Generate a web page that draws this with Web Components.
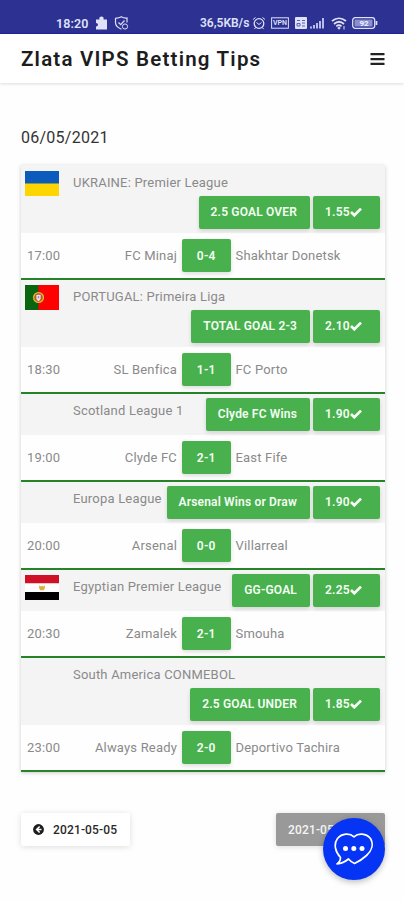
<!DOCTYPE html>
<html lang="en"><head><meta charset="utf-8"><title>Zlata VIPS Betting Tips</title>
<style>html,body{margin:0;background:#fefefe;width:404px;height:900px;overflow:hidden}body{font-family:Roboto,sans-serif;font-size:13px;color:#8a8a8a}</style></head>
<body><tips-app></tips-app>
<script>
const define=(name,html)=>customElements.define(name,class extends HTMLElement{
  connectedCallback(){if(this.shadowRoot)return;const r=this.attachShadow({mode:'open'});
    r.innerHTML='<style>*{box-sizing:border-box}svg{display:block;flex:none}</style>'+(typeof html==='function'?html(this):html);}
});

define('status-bar',`<style>
:host{display:flex;box-sizing:border-box;height:34px;background:#2d3192;border-bottom:1px solid #2022a0;color:#dfe1f8;font-weight:600;padding:13px 26px 0 56px;align-items:center;fill:none;stroke:#dfe1f8}
.t{font-size:12.5px;letter-spacing:.1px;width:39px;white-space:nowrap}.n{margin-left:auto;font-size:12px;width:50px;white-space:nowrap}svg{margin:0}
</style><span class="t">18:20</span>
<svg width="14" height="14" viewBox="0 0 14 14"><path d="M1 3.500h3.500C3.800 1.500 5 .5 6.500.5S9.200 1.500 8.500 3.500H12v10H1V10.500c2.600 0 2.600-3.500 0-3.500z" fill="#dfe1f8" stroke="none"/></svg>
<svg style="margin-left:5px" width="15" height="14" viewBox="0 0 15 14"><path d="M1.500 2q3 .3 5.700-1.200Q10 2.300 13 2v4.500M1.500 2v4.500c0 3.500 3 5.500 6 6.700M4.500 6.500l2.200 2.200L10.500 4.500" stroke-width="1.200"/><circle cx="11" cy="10.500" r="2.600"/></svg>
<span class="n">36,5KB/s</span>
<svg style="margin-left:2px" width="14" height="14" viewBox="0 0 14 14"><circle cx="7" cy="7.500" r="4.800" stroke-width="1.300"/><path d="M1 3.500l2.500-2M13 3.500l-2.500-2M4.500 6.500L7 8.500l2.500-2M3.500 11.500L2.500 13M10.500 11.500l1 1.500"/></svg>
<svg style="margin-left:5px" width="18" height="12" viewBox="0 0 18 12"><rect x=".6" y=".8" width="16.800" height="10.400"/><text x="9" y="8.400" text-anchor="middle" font-size="7" fill="#dfe1f8" stroke="none">VPN</text></svg>
<svg style="margin-left:6px" width="30" height="12" viewBox="0 0 30 12"><rect width="12" height="12" rx="1" fill="#dfe1f8" stroke="none"/><path d="M2 3.500h3M7 3.500h3M2 6.500h3v2.500H2zM7 6h3M7 9h3" stroke="#5c60b4"/><path d="M15 9.500h2v2h-2zM18 8h2v3.500h-2zM21 6h2v5.500h-2zM24 4h2v7.500h-2zM27 1h2v10.500h-2z" fill="#b8bce8" stroke="none"/></svg>
<svg style="margin-left:6px" width="16" height="13" viewBox="0 0 16 13"><path d="M1 4Q8-1.500 15 4M3 7Q8 2.500 13 7M5.300 9.300Q8 7 10.500 9.300" stroke-width="1.700"/><circle cx="8" cy="11" r="1" fill="#dfe1f8"/><path d="M13 9v3.500"/></svg>
<svg style="margin-left:5px" width="26" height="12" viewBox="0 0 26 12"><rect x=".7" y=".7" width="22" height="10.600" rx="2.500" stroke-width="1.300"/><rect x="2.500" y="2.500" width="18" height="7" fill="#8b8fd0" stroke="none"/><path d="M24.500 4v4" stroke-width="1.700"/><text x="12" y="9" text-anchor="middle" font-size="8" font-weight="700" fill="#f0f1ff" stroke="none">92</text></svg>`);

define('app-header',`<style>
:host{display:flex;box-sizing:border-box;height:49px;background:#fff;padding:0 19px 0 21px;justify-content:space-between;align-items:center;box-shadow:0 1px 3px #0002;color:#1d1d1d}
h1{font-size:20.5px;font-weight:600;letter-spacing:1.21px;margin:0;white-space:nowrap}
</style><h1><slot></slot></h1><svg width="15" height="12" viewBox="0 0 15 12" fill="#222"><path d="M.5 0h14v2.300H.5zM.5 4.900h14v2.300H.5zM.5 9.700h14V12H.5z"/></svg>`);

define('tip-badge',e=>`<style>
:host{display:inline-flex;box-sizing:border-box;height:33.500px;align-items:center;justify-content:center;background:#49b04e;color:#f3fff3;border-radius:2px;font-weight:600;font-size:12px;letter-spacing:.17px;white-space:nowrap;box-shadow:0 2px 4px #0002;flex:none}
:host([odds]){width:67px;justify-content:flex-start;padding-left:12px;letter-spacing:.2px}
:host([score]){width:48.500px;letter-spacing:.3px}
</style><slot></slot>${e.hasAttribute('odds')?'<svg width="12" height="10" viewBox="0 0 12 10"><path d="M1 5l3.300 3.300L11 1.600" fill="none" stroke="#f6fff6" stroke-width="2.700"/></svg>':''}`);

const flags={
 ua:'<path fill="#0b5bbd" d="M0 0h34v13H0z"/><path fill="#fdd500" d="M0 12.500h34V25H0z"/>',
 pt:'<path fill="red" d="M0 0h34v25H0z"/><path fill="#0a6410" d="M0 0h13.500v25H0z"/><circle cx="13.500" cy="12.500" r="4.900" fill="#a5651c" stroke="#d9c032" stroke-width="1.300"/><path d="M11 9.500h5v4q0 2-2.500 3-2.500-1-2.500-3z" fill="#f4e6e6" stroke="#d44" stroke-width=".8"/><path d="M12.700 11h1.600v2.500h-1.600z" fill="#8799c5"/>',
 eg:'<path fill="#fff" d="M0 0h34v25H0z"/><path fill="#ce1126" d="M0 0h34v8.300H0z"/><path fill="#000" d="M0 17h34v8H0z"/><path d="M14 10.500l2 1 1-1 1 1 2-1-.3 3.500-1 .3.700 1h-4.800l.7-1-1-.3z" fill="#d9b13e"/>'
};
define('match-entry',e=>{const a=n=>e.getAttribute(n)||'',two=e.hasAttribute('wrap');return `<style>
:host{display:block;border-bottom:2px solid #258428}
.l{background:#f4f4f4;height:${two?67:41}px;display:grid;align-items:start;grid-template-columns:48px 1fr auto;${two?'grid-template-rows:27px 34px;':''}padding:3.500px 5px 0 4px}
.name{padding-top:4px;line-height:17px;white-space:nowrap;letter-spacing:.2px;${two?'grid-column:2/4':''}}
.b{display:flex;gap:3.500px;${two?'grid-column:1/4;justify-self:end;margin-top:-1px':''}}
.pick{padding:0 12.500px 0 12px}
.m{height:45px;background:#fefefe;display:grid;grid-template-columns:39px 116px 48.500px 1fr;align-items:center;padding-left:6px}
.m>span{white-space:nowrap;letter-spacing:.18px}.home{text-align:right;padding-right:5px}.away{padding-left:5px}
.flag{margin-top:1px;height:25px}
</style><div class="l"><div class="flag">${flags[a('flag')]?`<svg width="34" height="25" viewBox="0 0 34 25">${flags[a('flag')]}</svg>`:''}</div>
<div class="name">${a('league')}</div><div class="b"><tip-badge class="pick">${a('pick')}</tip-badge><tip-badge odds>${a('odds')}</tip-badge></div></div>
<div class="m"><span>${a('time')}</span><span class="home">${a('home')}</span><tip-badge score>${a('score')}</tip-badge><span class="away">${a('away')}</span></div>`});

define('tips-card',`<style>:host{display:block;margin:0 19px 0 21px;padding-top:1px;background:#f4f4f4;box-shadow:0 1px 4px #0003}</style><slot></slot>`);

define('day-button',e=>`<style>
:host{display:flex;box-sizing:border-box;width:109px;height:33px;align-items:center;padding-left:12px;font-size:12px;letter-spacing:.15px;font-weight:500;white-space:nowrap;background:#fff;color:#292929;border-radius:2px;box-shadow:0 1px 6px #0002}
:host([next]){background:#999;color:#f5f5f5}svg{margin-right:9px}
</style>${e.hasAttribute('next')?'':'<svg width="11" height="11" viewBox="0 0 11 11"><circle cx="5.500" cy="5.500" r="5.400" fill="#1d1d1d"/><path d="M6.600 2.500l-3 3 3 3M3.800 5.500H8.500" fill="none" stroke="#fff" stroke-width="1.500"/></svg>'}<slot></slot>`);

define('chat-button',`<style>
:host{position:absolute;left:322.500px;top:817.500px;width:62px;height:62px;border-radius:50%;background:#0634f4;box-shadow:0 2px 6px #0004;display:flex;align-items:center;justify-content:center}
</style><svg width="40" height="34" viewBox="0 0 40 34"><path d="M6.500 25.500C1 19.500-.5 12 3.500 6.500 8 1 16 1 20 4.800 24 1 32 1 36.500 6.500c3.500 6 1 12.500-4 17-3.500 3.200-8 6.200-12 8-2.500-1-4.500-2.700-6-4.500-3.300 2.800-7 4.500-11.500 5 2.500-1.800 3.500-4 3.500-6.500z" fill="none" stroke="#fff" stroke-width="1.700" stroke-linejoin="round"/><g fill="#fff"><circle cx="11.500" cy="16.500" r="2.500"/><circle cx="19.800" cy="16.500" r="2.500"/><circle cx="28" cy="16.500" r="2.500"/></g></svg>`);

define('tips-app',`<style>
:host{display:block;position:relative;height:900px;width:404px;overflow:hidden}
h2{margin:43px 0 0 21px;height:39px;line-height:24px;font-size:16px;font-weight:400;letter-spacing:.25px;color:#333}
nav{display:flex;justify-content:space-between;margin:41px 19px 0 21px}
</style><status-bar></status-bar><app-header>Zlata VIPS Betting Tips</app-header><h2>06/05/2021</h2>
<tips-card>
<match-entry wrap flag="ua" league="UKRAINE: Premier League" pick="2.5 GOAL OVER" odds="1.55" time="17:00" home="FC Minaj" score="0-4" away="Shakhtar Donetsk"></match-entry>
<match-entry wrap flag="pt" league="PORTUGAL: Primeira Liga" pick="TOTAL GOAL 2-3" odds="2.10" time="18:30" home="SL Benfica" score="1-1" away="FC Porto"></match-entry>
<match-entry league="Scotland League 1" pick="Clyde FC Wins" odds="1.90" time="19:00" home="Clyde FC" score="2-1" away="East Fife"></match-entry>
<match-entry league="Europa League" pick="Arsenal Wins or Draw" odds="1.90" time="20:00" home="Arsenal" score="0-0" away="Villarreal"></match-entry>
<match-entry flag="eg" league="Egyptian Premier League" pick="GG-GOAL" odds="2.25" time="20:30" home="Zamalek" score="2-1" away="Smouha"></match-entry>
<match-entry wrap league="South America CONMEBOL" pick="2.5 GOAL UNDER" odds="1.85" time="23:00" home="Always Ready" score="2-0" away="Deportivo Tachira"></match-entry>
</tips-card>
<nav><day-button>2021-05-05</day-button><day-button next>2021-05-07</day-button></nav>
<chat-button></chat-button>`);
</script></body></html>
